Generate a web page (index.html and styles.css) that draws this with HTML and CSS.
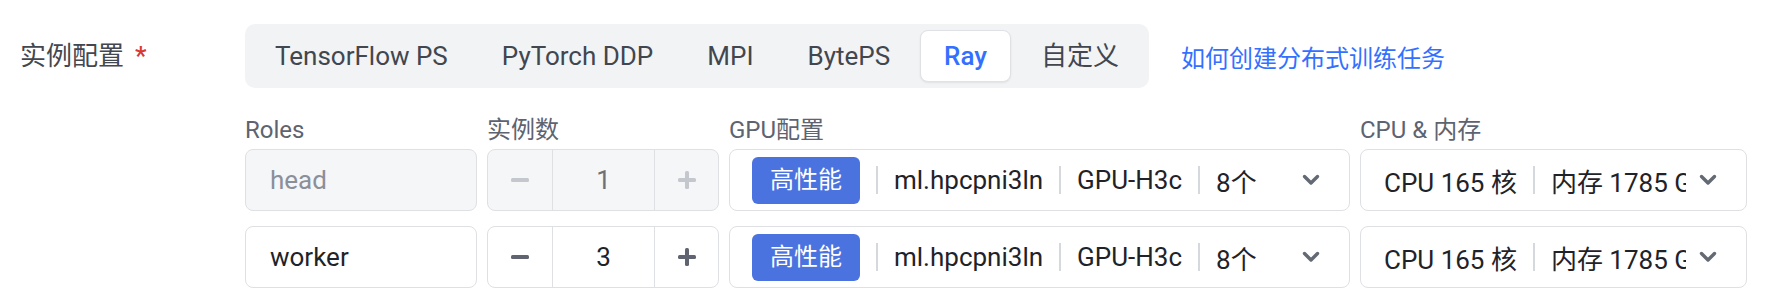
FILE: index.html
```html
<!DOCTYPE html>
<html lang="zh-CN">
<head>
<meta charset="utf-8">
<title>实例配置</title>
<link rel="stylesheet" href="styles.css">
</head>
<body>
<div class="form-item">
  <div class="form-label">实例配置<span class="required">*</span></div>
  <div class="form-body">
    <div class="top-line">
      <div class="tabs">
        <div class="tab">TensorFlow PS</div>
        <div class="tab">PyTorch DDP</div>
        <div class="tab">MPI</div>
        <div class="tab">BytePS</div>
        <div class="tab active">Ray</div>
        <div class="tab">自定义</div>
      </div>
      <a class="help-link">如何创建分布式训练任务</a>
    </div>

    <div class="grid">
      <div class="col-head">Roles</div>
      <div class="col-head">实例数</div>
      <div class="col-head">GPU配置</div>
      <div class="col-head">CPU &amp; 内存</div>

      <div class="role-input disabled">head</div>
      <div class="stepper disabled">
        <div class="step-btn"><svg width="18" height="4" viewBox="0 0 18 4"><rect x="0" y="0" width="18" height="4" rx="1.5"/></svg></div>
        <div class="step-val">1</div>
        <div class="step-btn"><svg width="18" height="18" viewBox="0 0 18 18"><rect x="0" y="7" width="18" height="4" rx="1.5"/><rect x="7" y="0" width="4" height="18" rx="1.5"/></svg></div>
      </div>
      <div class="select gpu">
        <span class="badge">高性能</span>
        <span class="sep"></span>
        <span class="val">ml.hpcpni3ln</span>
        <span class="sep"></span>
        <span class="val">GPU-H3c</span>
        <span class="sep"></span>
        <span class="val">8个</span>
        <svg class="chev" width="18" height="12" viewBox="0 0 18 12"><path d="M2.5 2.5 L9 9 L15.5 2.5"/></svg>
      </div>
      <div class="select cpu">
        <div class="cpu-text"><span class="val">CPU 165 核</span><span class="sep"></span><span class="val">内存 1785 GiB</span></div>
        <svg class="chev" width="18" height="12" viewBox="0 0 18 12"><path d="M2.5 2.5 L9 9 L15.5 2.5"/></svg>
      </div>

      <div class="role-input">worker</div>
      <div class="stepper">
        <div class="step-btn"><svg width="18" height="4" viewBox="0 0 18 4"><rect x="0" y="0" width="18" height="4" rx="1.5"/></svg></div>
        <div class="step-val">3</div>
        <div class="step-btn"><svg width="18" height="18" viewBox="0 0 18 18"><rect x="0" y="7" width="18" height="4" rx="1.5"/><rect x="7" y="0" width="4" height="18" rx="1.5"/></svg></div>
      </div>
      <div class="select gpu">
        <span class="badge">高性能</span>
        <span class="sep"></span>
        <span class="val">ml.hpcpni3ln</span>
        <span class="sep"></span>
        <span class="val">GPU-H3c</span>
        <span class="sep"></span>
        <span class="val">8个</span>
        <svg class="chev" width="18" height="12" viewBox="0 0 18 12"><path d="M2.5 2.5 L9 9 L15.5 2.5"/></svg>
      </div>
      <div class="select cpu">
        <div class="cpu-text"><span class="val">CPU 165 核</span><span class="sep"></span><span class="val">内存 1785 GiB</span></div>
        <svg class="chev" width="18" height="12" viewBox="0 0 18 12"><path d="M2.5 2.5 L9 9 L15.5 2.5"/></svg>
      </div>
    </div>
  </div>
</div>
</body>
</html>
```

FILE: styles.css
```css
* { box-sizing: border-box; }
html, body { margin: 0; padding: 0; background: #fff; }
body {
  width: 1770px;
  height: 302px;
  overflow: hidden;
  font-family: Roboto, "Noto Sans CJK SC", sans-serif;
  color: #1f2329;
}
.form-item {
  display: flex;
  padding-top: 24px;
}
.form-label {
  width: 245px;
  padding-left: 20px;
  height: 64px;
  line-height: 64px;
  font-size: 26px;
  color: #43474f;
  white-space: nowrap;
}
.required {
  color: #d83931;
  margin-left: 11px;
  font-weight: 500;
}
.form-body { display: flex; flex-direction: column; }
.top-line { display: flex; align-items: center; }
.tabs {
  display: flex;
  gap: 6px;
  padding: 6px;
  background: #f2f3f5;
  border-radius: 10px;
  height: 64px;
}
.tab {
  height: 52px;
  line-height: 52px;
  padding: 0 24px;
  font-size: 26px;
  color: #41464f;
  border-radius: 8px;
  white-space: nowrap;
}
.tab.active {
  background: #fff;
  color: #3370ff;
  font-weight: 500;
  border: 1px solid #dfe1e5;
  line-height: 50px;
  padding: 0 23px;
  box-shadow: 0 1px 2px rgba(31, 35, 41, 0.08);
}
.help-link {
  margin-left: 32px;
  font-size: 24px;
  color: #3370ff;
  white-space: nowrap;
}
.grid {
  display: grid;
  grid-template-columns: 232px 232px 621px 387px;
  column-gap: 10px;
  row-gap: 15px;
  margin-top: 26px;
}
.col-head {
  font-size: 24px;
  line-height: 32px;
  height: 32px;
  color: #5d6370;
  white-space: nowrap;
  margin-bottom: -12px;
}
.role-input {
  height: 62px;
  line-height: 60px;
  border: 1px solid #dee0e3;
  border-radius: 8px;
  padding: 0 24px;
  font-size: 26px;
  color: #1f2329;
  background: #fff;
}
.role-input.disabled {
  background: #f5f6f7;
  color: #8a8f99;
}
.stepper {
  height: 62px;
  border: 1px solid #dee0e3;
  border-radius: 8px;
  display: grid;
  grid-template-columns: 64px 1fr 63px;
  background: #fff;
}
.stepper.disabled { background: #f5f6f7; }
.step-btn {
  display: flex;
  align-items: center;
  justify-content: center;
  fill: #5f6470;
}
.stepper.disabled .step-btn { fill: #c4c7cd; }
.step-val {
  border-left: 1px solid #dee0e3;
  border-right: 1px solid #dee0e3;
  display: flex;
  align-items: center;
  justify-content: center;
  font-size: 26px;
  color: #1f2329;
}
.stepper.disabled .step-val { color: #6b7079; }
.select {
  height: 62px;
  border: 1px solid #dee0e3;
  border-radius: 8px;
  display: flex;
  align-items: center;
  padding: 0 29px 0 22px;
  background: #fff;
  font-size: 26px;
  color: #1f2329;
  white-space: nowrap;
}
.badge {
  height: 47px;
  line-height: 47px;
  padding: 0 18px;
  background: #4a73df;
  color: #fff;
  font-size: 24px;
  border-radius: 6px;
}
.sep {
  display: inline-block;
  width: 2px;
  height: 28px;
  background: #d5d8dc;
  margin: 0 16px;
  flex: none;
}
.val { white-space: nowrap; }
.chev {
  flex: none;
  margin-left: auto;
  fill: none;
  stroke: #646a73;
  stroke-width: 3.4;
  stroke-linecap: round;
  stroke-linejoin: round;
}
.cpu .cpu-text {
  display: flex;
  align-items: center;
  overflow: hidden;
  width: 303px;
  padding-left: 1px;
}
.cpu .chev { margin-left: auto; }
```
